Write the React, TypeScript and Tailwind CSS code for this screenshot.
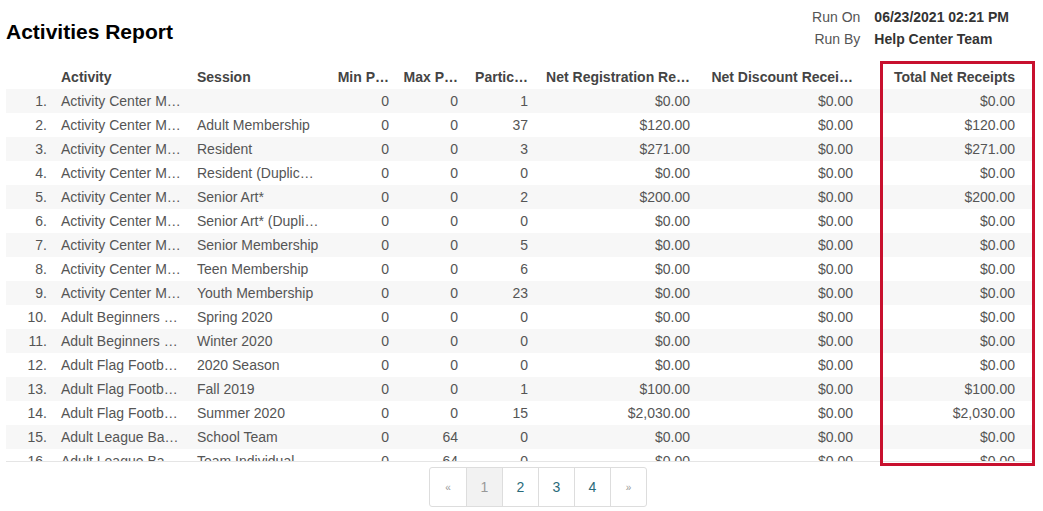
import React from "react";

const rows: string[][] = [
  ["Activity Center M…", "", "0", "0", "1", "$0.00", "$0.00", "$0.00"],
  ["Activity Center M…", "Adult Membership", "0", "0", "37", "$120.00", "$0.00", "$120.00"],
  ["Activity Center M…", "Resident", "0", "0", "3", "$271.00", "$0.00", "$271.00"],
  ["Activity Center M…", "Resident (Duplic…", "0", "0", "0", "$0.00", "$0.00", "$0.00"],
  ["Activity Center M…", "Senior Art*", "0", "0", "2", "$200.00", "$0.00", "$200.00"],
  ["Activity Center M…", "Senior Art* (Dupli…", "0", "0", "0", "$0.00", "$0.00", "$0.00"],
  ["Activity Center M…", "Senior Membership", "0", "0", "5", "$0.00", "$0.00", "$0.00"],
  ["Activity Center M…", "Teen Membership", "0", "0", "6", "$0.00", "$0.00", "$0.00"],
  ["Activity Center M…", "Youth Membership", "0", "0", "23", "$0.00", "$0.00", "$0.00"],
  ["Adult Beginners …", "Spring 2020", "0", "0", "0", "$0.00", "$0.00", "$0.00"],
  ["Adult Beginners …", "Winter 2020", "0", "0", "0", "$0.00", "$0.00", "$0.00"],
  ["Adult Flag Footb…", "2020 Season", "0", "0", "0", "$0.00", "$0.00", "$0.00"],
  ["Adult Flag Footb…", "Fall 2019", "0", "0", "1", "$100.00", "$0.00", "$100.00"],
  ["Adult Flag Footb…", "Summer 2020", "0", "0", "15", "$2,030.00", "$0.00", "$2,030.00"],
  ["Adult League Ba…", "School Team", "0", "64", "0", "$0.00", "$0.00", "$0.00"],
  ["Adult League Ba…", "Team Individual", "0", "64", "0", "$0.00", "$0.00", "$0.00"],
];

function Row({ cells }: { cells: string[] }) {
  return (
    <div className="flex h-6 items-center whitespace-nowrap">
      <div className="w-[49px] shrink-0 pr-[8px] text-right">{cells[0]}</div>
      <div className="w-[136px] shrink-0 pl-[6px]">{cells[1]}</div>
      <div className="w-[136px] shrink-0 pl-[6px]">{cells[2]}</div>
      <div className="w-[70px] shrink-0 pr-[8px] text-right">{cells[3]}</div>
      <div className="w-[69px] shrink-0 pr-[8px] text-right">{cells[4]}</div>
      <div className="w-[70px] shrink-0 pr-[8px] text-right">{cells[5]}</div>
      <div className="w-[162px] shrink-0 pr-[8px] text-right">{cells[6]}</div>
      <div className="w-[163px] shrink-0 pr-[8px] text-right">{cells[7]}</div>
      <div className="w-[162px] shrink-0 pr-[8px] text-right">{cells[8]}</div>
    </div>
  );
}

export default function App() {
  return (
    <div className="relative h-[511px] w-[1043px] bg-white text-[14px] text-[#555]" style={{ fontFamily: '"Liberation Sans", Arial, sans-serif' }}>
      <div className="flex justify-between pl-[6px] pr-[34px] pt-[6px]">
        <h1 className="mt-[10px] text-[21px] font-bold text-black">Activities Report</h1>
        <div className="grid grid-cols-[auto_auto] gap-x-[14px] text-[14px] leading-[22px]">
          <span className="text-right">Run On</span>
          <span className="font-bold text-[#333]">06/23/2021 02:21 PM</span>
          <span className="text-right">Run By</span>
          <span className="font-bold text-[#333]">Help Center Team</span>
        </div>
      </div>
      <div className="ml-[6px] mt-[15px] w-[1029px]">
        <div className="font-bold text-[#444]">
          <Row cells={["", "Activity", "Session", "Min P…", "Max P…", "Partic…", "Net Registration Re…", "Net Discount Recei…", "Total Net Receipts"]} />
        </div>
        <div className="h-[373px] overflow-hidden border-b border-[#e5e5e5]">
          {rows.map((r, i) => (
            <div key={i} className={i % 2 === 0 ? "bg-[#f7f7f7]" : ""}>
              <Row cells={[`${i + 1}.`, ...r]} />
            </div>
          ))}
        </div>
      </div>
      <div className="mt-[5px] flex justify-center pl-[33px]">
        <div className="flex h-[40px] rounded-[3px] border border-[#ddd] text-[14px]">
          {["«", "1", "2", "3", "4", "»"].map((t, i) => (
            <div key={i} className={`flex w-[36px] items-center justify-center ${i > 0 ? "border-l border-[#ddd]" : ""} ${i === 1 ? "bg-[#f2f2f2] text-[#999]" : i === 0 || i === 5 ? "text-[10px] text-[#999]" : "text-[#2a6a7a]"}`}>{t}</div>
          ))}
        </div>
      </div>
      <div className="pointer-events-none absolute left-[880px] top-[61px] h-[405px] w-[155px] border-[3px] border-[#c8102e]" />
    </div>
  );
}
